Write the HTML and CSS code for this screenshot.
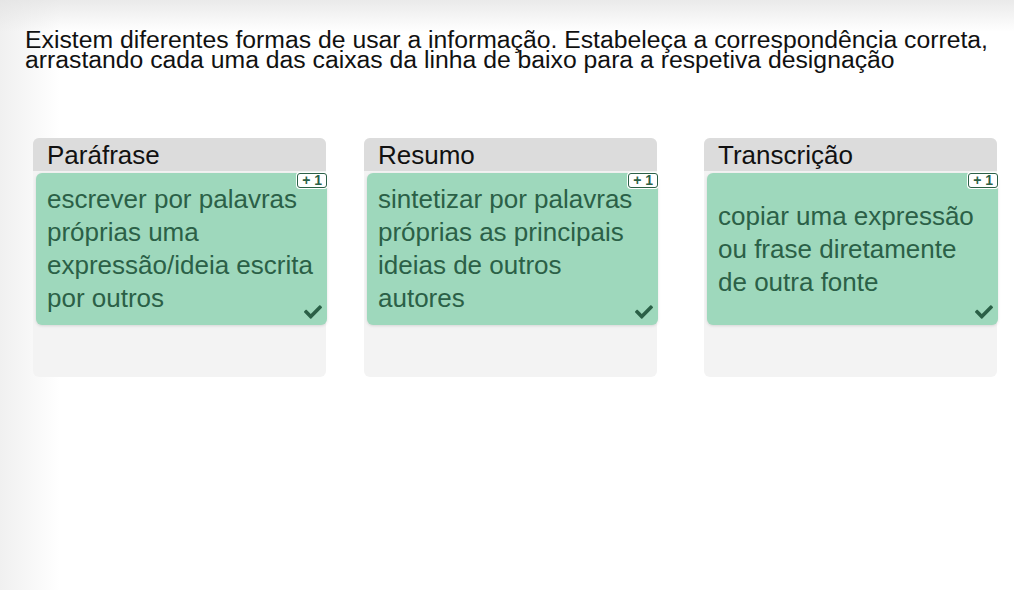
FILE: index.html
```html
<!DOCTYPE html>
<html lang="pt">
<head>
    <meta charset="UTF-8">
    <meta name="viewport" content="width=device-width, initial-scale=1.0">
    <title>Correspondência</title>
    <link rel="stylesheet" href="styles.css">
</head>
<body>
    <div class="page">
        <p class="question">Existem diferentes formas de usar a informação. Estabeleça a correspondência correta, arrastando cada uma das caixas da linha de baixo para a respetiva designação</p>

        <div class="targets">
            <div class="target">
                <div class="target-title">Paráfrase</div>
                <div class="card">
                    <span class="badge"><span>+ 1</span></span>
                    <p>escrever por palavras próprias uma expressão/ideia escrita por outros</p>
                    <svg class="check" viewBox="0 0 512 512"><path d="M173.9 439.4L7.5 273c-10-10-10-26.2 0-36.2l36.2-36.2c10-10 26.2-10 36.2 0L192 312.7 432.1 72.6c10-10 26.2-10 36.2 0l36.2 36.2c10 10 10 26.2 0 36.2L210.1 439.4c-10 10-26.2 10-36.2 0z"/></svg>
                </div>
            </div>

            <div class="target">
                <div class="target-title">Resumo</div>
                <div class="card">
                    <span class="badge"><span>+ 1</span></span>
                    <p>sintetizar por palavras próprias as principais ideias de outros autores</p>
                    <svg class="check" viewBox="0 0 512 512"><path d="M173.9 439.4L7.5 273c-10-10-10-26.2 0-36.2l36.2-36.2c10-10 26.2-10 36.2 0L192 312.7 432.1 72.6c10-10 26.2-10 36.2 0l36.2 36.2c10 10 10 26.2 0 36.2L210.1 439.4c-10 10-26.2 10-36.2 0z"/></svg>
                </div>
            </div>

            <div class="target">
                <div class="target-title">Transcrição</div>
                <div class="card">
                    <span class="badge"><span>+ 1</span></span>
                    <p>copiar uma expressão ou frase diretamente de outra fonte</p>
                    <svg class="check" viewBox="0 0 512 512"><path d="M173.9 439.4L7.5 273c-10-10-10-26.2 0-36.2l36.2-36.2c10-10 26.2-10 36.2 0L192 312.7 432.1 72.6c10-10 26.2-10 36.2 0l36.2 36.2c10 10 10 26.2 0 36.2L210.1 439.4c-10 10-26.2 10-36.2 0z"/></svg>
                </div>
            </div>
        </div>
    </div>
</body>
</html>
```

FILE: styles.css
```css
body{
    margin: 0;
    font-family: "Liberation Sans", Arial, sans-serif;
    background-color: #fff;
}
.page{
    height: 590px;
    box-sizing: border-box;
    padding-top: 30px;
    background:
        linear-gradient(to bottom, rgba(225,225,225,0.7), rgba(255,255,255,0) 32px),
        linear-gradient(to right, #f0f0f0, #fff 60px);
}
.question{
    margin: 0 0 0 25px;
    font-size: 24.75px;
    line-height: 20px;
    color: #111;
}

.targets{
    display: flex;
    gap: 38px;
    padding: 0 17px 0 33px;
    margin-top: 68px;
}
.target{
    width: 293px;
    height: 239px;
    background-color: #f3f3f3;
    border-radius: 6px;
}
.target:last-child{
    margin-left: auto;
}
.target-title{
    background-color: #dcdcdc;
    border-radius: 6px 6px 0 0;
    height: 33px;
    padding-left: 14px;
    font-size: 26px;
    line-height: 34px;
    color: #111;
}

.card{
    position: relative;
    display: flex;
    align-items: center;
    box-sizing: border-box;
    width: 291px;
    height: 152px;
    margin: 2px 0 0 3px;
    padding: 8px 10px 8px 11px;
    background-color: #9ed8bc;
    border-radius: 6px;
    box-shadow: 0 1px 3px rgba(0,0,0,0.12);
}
.card p{
    margin: 0;
    font-size: 26px;
    line-height: 33px;
    color: #2b6047;
}
.badge{
    position: absolute;
    top: -1px;
    right: -1px;
    padding: 1px;
    background-color: #fff;
    border-radius: 4px;
}
.badge span{
    display: block;
    padding: 0 4px;
    border: 1.5px solid #2b6047;
    border-radius: 3px;
    font-size: 14px;
    font-weight: 700;
    line-height: 13px;
    color: #2b6047;
}
.check{
    position: absolute;
    right: 5px;
    bottom: 4px;
    width: 18px;
    height: 18px;
    fill: #2b6047;
}
```
